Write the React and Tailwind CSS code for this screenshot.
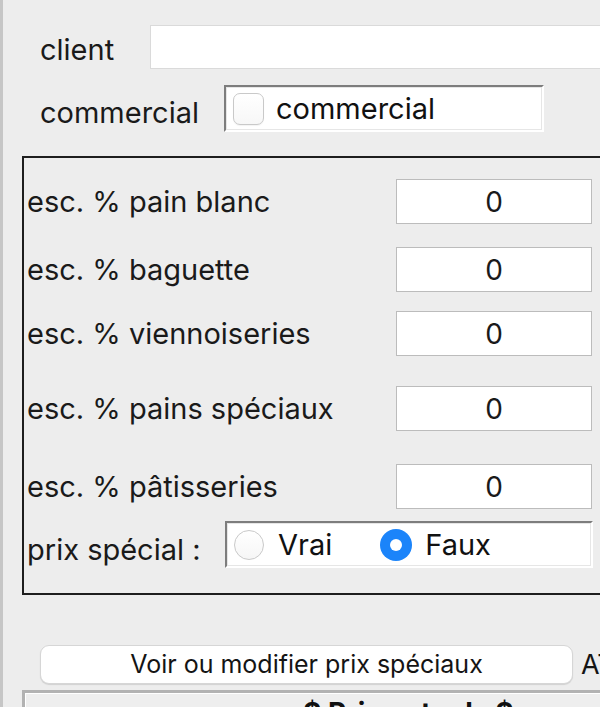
import React from "react";

function Field({ label, mt }) {
  return (
    <div className={`flex items-center ${mt}`}>
      <div className="w-[372px] shrink-0 pl-[3px] text-[29px] leading-none text-[#1a1a1a]">{label}</div>
      <div className="w-[196px] shrink-0 h-[45px] bg-white border border-[#bcbcbc] flex items-center justify-center text-[28px] text-[#1a1a1a]">
        0
      </div>
    </div>
  );
}

export default function App() {
  return (
    <div
      className="w-[600px] h-[707px] overflow-hidden bg-[#ededed] border-l-[3px] border-[#c6c6c6] relative"
      style={{ fontFamily: "Inter, 'Noto Sans', sans-serif" }}
    >
      {/* client */}
      <div className="flex items-center pt-[25px]">
        <div className="w-[147px] shrink-0 pl-[37px] pt-[5px] text-[29px] leading-none text-[#1a1a1a]">client</div>
        <div className="flex-1 h-[44px] bg-white border border-[#dadada] mr-[-10px]"></div>
      </div>

      {/* commercial */}
      <div className="flex items-center mt-[16px]">
        <div className="w-[221px] shrink-0 pl-[37px] pt-[7px] text-[29px] leading-none text-[#1a1a1a]">commercial</div>
        <div className="w-[320px] shrink-0 h-[47px] bg-white border-t-2 border-l-2 border-[#7d7d7d] border-b-2 border-r-2 border-b-white border-r-white">
          <div className="h-full border border-[#e6e6e6] flex items-center pl-[6px]">
            <div className="w-[31px] h-[32px] rounded-[7px] border border-[#c9c9c9] bg-gradient-to-b from-white to-[#f7f7f7] shadow-[0_1px_1px_rgba(0,0,0,0.05)]"></div>
            <div className="ml-[12px] text-[29px] leading-none text-[#111]">commercial</div>
          </div>
        </div>
      </div>

      {/* group */}
      <div className="ml-[19px] mr-[-20px] mt-[24px] border-2 border-[#1e1e1e] pt-[21px] pb-[25px] h-[439px]">
        <Field label="esc. % pain blanc" mt="" />
        <Field label="esc. % baguette" mt="mt-[23px]" />
        <Field label="esc. % viennoiseries" mt="mt-[19px]" />
        <Field label="esc. % pains spéciaux" mt="mt-[30px]" />
        <Field label="esc. % pâtisseries" mt="mt-[33px]" />
        <div className="flex items-center mt-[12px]">
          <div className="w-[201px] shrink-0 pl-[3px] pt-[9px] text-[29px] leading-none text-[#1a1a1a]">prix spécial :</div>
          <div className="w-[368px] shrink-0 h-[47px] bg-white border-t-2 border-l-2 border-[#7d7d7d] border-b-2 border-r-2 border-b-white border-r-white">
            <div className="h-full border border-[#e6e6e6] flex items-center pl-[6px]">
              <div className="w-[30px] h-[30px] rounded-full border border-[#c9c9c9] bg-gradient-to-b from-white to-[#f6f6f6]"></div>
              <div className="ml-[14px] text-[29px] leading-none text-[#111]">Vrai</div>
              <div className="ml-[48px] w-[32px] h-[32px] rounded-full bg-[#1b84fa] flex items-center justify-center">
                <div className="w-[12px] h-[12px] rounded-full bg-white"></div>
              </div>
              <div className="ml-[13px] text-[29px] leading-none text-[#111]">Faux</div>
            </div>
          </div>
        </div>
      </div>

      {/* button row */}
      <div className="flex items-center mt-[50px]">
        <div className="ml-[37px] shrink-0 w-[533px] h-[39px] rounded-[9px] bg-white border border-[#d6d6d6] shadow-[0_1px_1px_rgba(0,0,0,0.12)] flex items-center justify-center text-[25px] text-[#141414]">
          Voir ou modifier prix spéciaux
        </div>
        <div className="ml-[8px] shrink-0 text-[27px] leading-none text-[#141414] whitespace-nowrap">AT</div>
      </div>

      {/* bottom box */}
      <div className="ml-[19px] mr-[-20px] mt-[6px] h-[40px] border-t-[3px] border-l-[3px] border-[#b2b2b2] bg-[#eeeeee]">
        <div className="h-full border-t border-l border-white pt-[5px] pl-[277px] text-[28px] font-bold leading-none text-[#111] whitespace-nowrap">
          $ Prix actuels $
        </div>
      </div>
    </div>
  );
}
